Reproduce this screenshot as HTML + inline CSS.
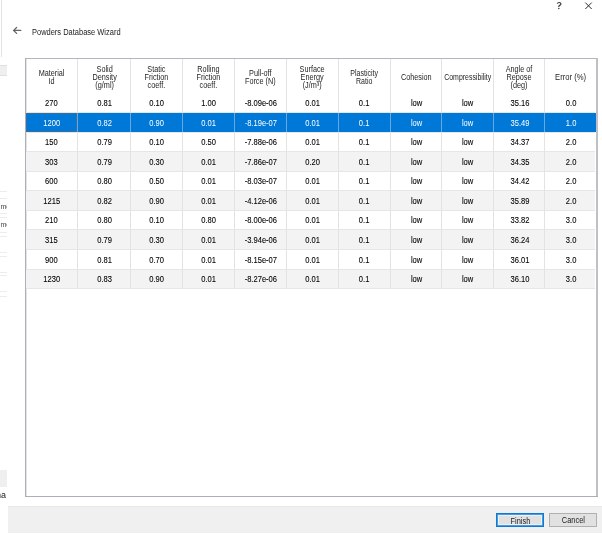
<!DOCTYPE html>
<html><head><meta charset="utf-8"><style>
html,body{margin:0;padding:0;}
body{width:602px;height:534px;position:relative;overflow:hidden;background:#fff;font-family:"Liberation Sans",sans-serif;color:#1a1a1a;-webkit-font-smoothing:antialiased;}
#root{position:absolute;left:0;top:0;width:602px;height:534px;will-change:transform;}
.a{position:absolute;}
.vl{position:absolute;width:1px;background:#e3e3e3;}
.hl{position:absolute;height:1px;background:#e6e6e6;}
.hc{position:absolute;text-align:center;font-size:8.2px;line-height:8px;color:#1e1e1e;letter-spacing:0px;}
.hc span,.dc span{display:inline-block;transform-origin:50% 50%;}
.hc span{transform:scaleX(0.87);}
.dc span{transform:scaleX(0.86);}
.dc{position:absolute;text-align:center;font-size:8.8px;line-height:9px;color:#000;-webkit-text-stroke:0.1px currentColor;}
.bg{position:absolute;left:0;width:7px;height:1px;background:#ececec;}
</style></head><body><div id="root">

<div class="a" style="left:1px;top:0;width:1px;height:57px;background:#e4e4e4"></div>
<div class="a" style="left:0;top:65px;width:7px;height:9px;background:#efefef;border-top:1px solid #e0e0e0;border-bottom:1px solid #e0e0e0"></div>
<div class="bg" style="top:191px"></div>
<div class="bg" style="top:198px"></div>
<div class="bg" style="top:213px"></div>
<div class="bg" style="top:217px"></div>
<div class="bg" style="top:232px"></div>
<div class="bg" style="top:236px"></div>
<div class="bg" style="top:252px"></div>
<div class="bg" style="top:256px"></div>
<div class="bg" style="top:272px"></div>
<div class="bg" style="top:275px"></div>
<div class="bg" style="top:291px"></div>
<div class="bg" style="top:296px"></div>
<div class="a" style="left:0;top:195px;width:7px;height:40px;overflow:hidden"><div class="a" style="left:0.5px;top:8px;font-size:7px;color:#444;line-height:8px">me</div><div class="a" style="left:0.5px;top:26px;font-size:7px;color:#444;line-height:8px">me</div></div>
<div class="a" style="left:0;top:470px;width:7px;height:17px;background:#efefef"></div>
<div class="a" style="left:-4px;top:490px;font-size:9px;color:#222;line-height:10px">na</div>
<svg class="a" style="left:0;top:0" width="602" height="14" viewBox="0 0 602 14"><path d="M557.3 3.6C557.7 2.1 561 2 560.9 3.9C560.8 5.2 558.7 5.4 558.6 6.9" stroke="#333" stroke-width="1.15" fill="none"/><circle cx="558.8" cy="8.6" r="0.75" fill="#333"/><path d="M585.3 2.6L591.7 9M591.7 2.6L585.3 9" stroke="#222" stroke-width="0.95"/></svg>
<svg class="a" style="left:12px;top:26px" width="10" height="9" viewBox="0 0 10 9"><path d="M8.8 4.4H1.8M4.6 1.5L1.6 4.4L4.6 7.4" stroke="#666" stroke-width="1.25" fill="none" stroke-linecap="round"/></svg>
<div class="a" style="left:31.5px;top:27px;font-size:8.5px;line-height:10px;color:#222;transform:scaleX(0.88);transform-origin:0 50%">Powders Database Wizard</div>
<div class="a" style="left:25px;top:58px;width:573px;height:1px;background:#b3b5bc"></div>
<div class="a" style="left:25px;top:58px;width:1px;height:439px;background:#acafb7"></div>
<div class="a" style="left:26px;top:59px;width:1px;height:437px;background:#e3e4e8"></div>
<div class="a" style="left:596px;top:58px;width:2px;height:439px;background:#bec0c6"></div>
<div class="a" style="left:25px;top:496px;width:573px;height:1px;background:#acafb7"></div>
<div class="a" style="left:26px;top:112.5px;width:570px;height:19.6px;background:#0078d7"></div>
<div class="a" style="left:26px;top:151.7px;width:569px;height:19.6px;background:#f3f3f3"></div>
<div class="a" style="left:26px;top:190.8px;width:569px;height:19.6px;background:#f3f3f3"></div>
<div class="a" style="left:26px;top:229.8px;width:569px;height:19.6px;background:#f3f3f3"></div>
<div class="a" style="left:26px;top:269.0px;width:569px;height:19.6px;background:#f3f3f3"></div>
<div class="hl" style="left:26px;top:112.0px;width:569px"></div>
<div class="hl" style="left:26px;top:131.6px;width:569px"></div>
<div class="hl" style="left:26px;top:151.2px;width:569px"></div>
<div class="hl" style="left:26px;top:170.7px;width:569px"></div>
<div class="hl" style="left:26px;top:190.2px;width:569px"></div>
<div class="hl" style="left:26px;top:209.8px;width:569px"></div>
<div class="hl" style="left:26px;top:229.3px;width:569px"></div>
<div class="hl" style="left:26px;top:248.9px;width:569px"></div>
<div class="hl" style="left:26px;top:268.5px;width:569px"></div>
<div class="hl" style="left:26px;top:288.0px;width:569px"></div>
<div class="vl" style="left:77px;top:59px;height:229.5px"></div>
<div class="vl" style="left:130px;top:59px;height:229.5px"></div>
<div class="vl" style="left:182px;top:59px;height:229.5px"></div>
<div class="vl" style="left:234px;top:59px;height:229.5px"></div>
<div class="vl" style="left:286px;top:59px;height:229.5px"></div>
<div class="vl" style="left:338px;top:59px;height:229.5px"></div>
<div class="vl" style="left:390px;top:59px;height:229.5px"></div>
<div class="vl" style="left:441px;top:59px;height:229.5px"></div>
<div class="vl" style="left:493px;top:59px;height:229.5px"></div>
<div class="vl" style="left:544px;top:59px;height:229.5px"></div>
<div class="vl" style="left:77px;top:113px;height:19px;background:#6aa7e0"></div>
<div class="vl" style="left:130px;top:113px;height:19px;background:#6aa7e0"></div>
<div class="vl" style="left:182px;top:113px;height:19px;background:#6aa7e0"></div>
<div class="vl" style="left:234px;top:113px;height:19px;background:#6aa7e0"></div>
<div class="vl" style="left:286px;top:113px;height:19px;background:#6aa7e0"></div>
<div class="vl" style="left:338px;top:113px;height:19px;background:#6aa7e0"></div>
<div class="vl" style="left:390px;top:113px;height:19px;background:#6aa7e0"></div>
<div class="vl" style="left:441px;top:113px;height:19px;background:#6aa7e0"></div>
<div class="vl" style="left:493px;top:113px;height:19px;background:#6aa7e0"></div>
<div class="vl" style="left:544px;top:113px;height:19px;background:#6aa7e0"></div>
<div class="a" style="left:26px;top:113px;width:49px;height:17px;border:1px solid #5a6a7a;opacity:0.6"></div>
<div class="hc" style="left:15.0px;width:73.0px;top:69.75px"><span style="transform:scaleX(0.8874)">Material<br>Id</span></div>
<div class="hc" style="left:68.0px;width:72.6px;top:65.75px"><span style="transform:scaleX(0.8874)">Solid<br>Density<br>(g/ml)</span></div>
<div class="hc" style="left:120.6px;width:72.2px;top:65.75px"><span style="transform:scaleX(0.8874)">Static<br>Friction<br>coeff.</span></div>
<div class="hc" style="left:172.8px;width:71.8px;top:65.75px"><span style="transform:scaleX(0.8874)">Rolling<br>Friction<br>coeff.</span></div>
<div class="hc" style="left:224.6px;width:72.1px;top:69.75px"><span style="transform:scaleX(0.8874)">Pull-off<br>Force (N)</span></div>
<div class="hc" style="left:276.7px;width:71.8px;top:65.75px"><span style="transform:scaleX(0.8874)">Surface<br>Energy<br>(J/m&sup3;)</span></div>
<div class="hc" style="left:328.5px;width:71.7px;top:69.75px"><span style="transform:scaleX(0.8568)">Plasticity<br>Ratio</span></div>
<div class="hc" style="left:380.2px;width:71.5px;top:73.75px"><span style="transform:scaleX(0.8874)">Cohesion</span></div>
<div class="hc" style="left:431.7px;width:72.1px;top:73.75px"><span style="transform:scaleX(0.8466)">Compressibility</span></div>
<div class="hc" style="left:483.8px;width:71.1px;top:65.75px"><span style="transform:scaleX(0.8874)">Angle of<br>Repose<br>(deg)</span></div>
<div class="hc" style="left:534.9px;width:72.1px;top:73.75px"><span style="transform:scaleX(0.9384)">Error (%)</span></div>
<div class="dc" style="left:25.2px;width:53.0px;top:99.1px;color:#000"><span>270</span></div>
<div class="dc" style="left:78.2px;width:52.6px;top:99.1px;color:#000"><span>0.81</span></div>
<div class="dc" style="left:130.8px;width:52.2px;top:99.1px;color:#000"><span>0.10</span></div>
<div class="dc" style="left:183.0px;width:51.8px;top:99.1px;color:#000"><span>1.00</span></div>
<div class="dc" style="left:234.8px;width:52.1px;top:99.1px;color:#000"><span>-8.09e-06</span></div>
<div class="dc" style="left:286.9px;width:51.8px;top:99.1px;color:#000"><span>0.01</span></div>
<div class="dc" style="left:338.7px;width:51.7px;top:99.1px;color:#000"><span>0.1</span></div>
<div class="dc" style="left:390.4px;width:51.5px;top:99.1px;color:#000"><span>low</span></div>
<div class="dc" style="left:441.9px;width:52.1px;top:99.1px;color:#000"><span>low</span></div>
<div class="dc" style="left:494.0px;width:51.1px;top:99.1px;color:#000"><span>35.16</span></div>
<div class="dc" style="left:545.1px;width:52.1px;top:99.1px;color:#000"><span>0.0</span></div>
<div class="dc" style="left:25.2px;width:53.0px;top:118.6px;color:#fff;-webkit-text-stroke:0"><span>1200</span></div>
<div class="dc" style="left:78.2px;width:52.6px;top:118.6px;color:#fff;-webkit-text-stroke:0"><span>0.82</span></div>
<div class="dc" style="left:130.8px;width:52.2px;top:118.6px;color:#fff;-webkit-text-stroke:0"><span>0.90</span></div>
<div class="dc" style="left:183.0px;width:51.8px;top:118.6px;color:#fff;-webkit-text-stroke:0"><span>0.01</span></div>
<div class="dc" style="left:234.8px;width:52.1px;top:118.6px;color:#fff;-webkit-text-stroke:0"><span>-8.19e-07</span></div>
<div class="dc" style="left:286.9px;width:51.8px;top:118.6px;color:#fff;-webkit-text-stroke:0"><span>0.01</span></div>
<div class="dc" style="left:338.7px;width:51.7px;top:118.6px;color:#fff;-webkit-text-stroke:0"><span>0.1</span></div>
<div class="dc" style="left:390.4px;width:51.5px;top:118.6px;color:#fff;-webkit-text-stroke:0"><span>low</span></div>
<div class="dc" style="left:441.9px;width:52.1px;top:118.6px;color:#fff;-webkit-text-stroke:0"><span>low</span></div>
<div class="dc" style="left:494.0px;width:51.1px;top:118.6px;color:#fff;-webkit-text-stroke:0"><span>35.49</span></div>
<div class="dc" style="left:545.1px;width:52.1px;top:118.6px;color:#fff;-webkit-text-stroke:0"><span>1.0</span></div>
<div class="dc" style="left:25.2px;width:53.0px;top:138.2px;color:#000"><span>150</span></div>
<div class="dc" style="left:78.2px;width:52.6px;top:138.2px;color:#000"><span>0.79</span></div>
<div class="dc" style="left:130.8px;width:52.2px;top:138.2px;color:#000"><span>0.10</span></div>
<div class="dc" style="left:183.0px;width:51.8px;top:138.2px;color:#000"><span>0.50</span></div>
<div class="dc" style="left:234.8px;width:52.1px;top:138.2px;color:#000"><span>-7.88e-06</span></div>
<div class="dc" style="left:286.9px;width:51.8px;top:138.2px;color:#000"><span>0.01</span></div>
<div class="dc" style="left:338.7px;width:51.7px;top:138.2px;color:#000"><span>0.1</span></div>
<div class="dc" style="left:390.4px;width:51.5px;top:138.2px;color:#000"><span>low</span></div>
<div class="dc" style="left:441.9px;width:52.1px;top:138.2px;color:#000"><span>low</span></div>
<div class="dc" style="left:494.0px;width:51.1px;top:138.2px;color:#000"><span>34.37</span></div>
<div class="dc" style="left:545.1px;width:52.1px;top:138.2px;color:#000"><span>2.0</span></div>
<div class="dc" style="left:25.2px;width:53.0px;top:157.7px;color:#000"><span>303</span></div>
<div class="dc" style="left:78.2px;width:52.6px;top:157.7px;color:#000"><span>0.79</span></div>
<div class="dc" style="left:130.8px;width:52.2px;top:157.7px;color:#000"><span>0.30</span></div>
<div class="dc" style="left:183.0px;width:51.8px;top:157.7px;color:#000"><span>0.01</span></div>
<div class="dc" style="left:234.8px;width:52.1px;top:157.7px;color:#000"><span>-7.86e-07</span></div>
<div class="dc" style="left:286.9px;width:51.8px;top:157.7px;color:#000"><span>0.20</span></div>
<div class="dc" style="left:338.7px;width:51.7px;top:157.7px;color:#000"><span>0.1</span></div>
<div class="dc" style="left:390.4px;width:51.5px;top:157.7px;color:#000"><span>low</span></div>
<div class="dc" style="left:441.9px;width:52.1px;top:157.7px;color:#000"><span>low</span></div>
<div class="dc" style="left:494.0px;width:51.1px;top:157.7px;color:#000"><span>34.35</span></div>
<div class="dc" style="left:545.1px;width:52.1px;top:157.7px;color:#000"><span>2.0</span></div>
<div class="dc" style="left:25.2px;width:53.0px;top:177.3px;color:#000"><span>600</span></div>
<div class="dc" style="left:78.2px;width:52.6px;top:177.3px;color:#000"><span>0.80</span></div>
<div class="dc" style="left:130.8px;width:52.2px;top:177.3px;color:#000"><span>0.50</span></div>
<div class="dc" style="left:183.0px;width:51.8px;top:177.3px;color:#000"><span>0.01</span></div>
<div class="dc" style="left:234.8px;width:52.1px;top:177.3px;color:#000"><span>-8.03e-07</span></div>
<div class="dc" style="left:286.9px;width:51.8px;top:177.3px;color:#000"><span>0.01</span></div>
<div class="dc" style="left:338.7px;width:51.7px;top:177.3px;color:#000"><span>0.1</span></div>
<div class="dc" style="left:390.4px;width:51.5px;top:177.3px;color:#000"><span>low</span></div>
<div class="dc" style="left:441.9px;width:52.1px;top:177.3px;color:#000"><span>low</span></div>
<div class="dc" style="left:494.0px;width:51.1px;top:177.3px;color:#000"><span>34.42</span></div>
<div class="dc" style="left:545.1px;width:52.1px;top:177.3px;color:#000"><span>2.0</span></div>
<div class="dc" style="left:25.2px;width:53.0px;top:196.8px;color:#000"><span>1215</span></div>
<div class="dc" style="left:78.2px;width:52.6px;top:196.8px;color:#000"><span>0.82</span></div>
<div class="dc" style="left:130.8px;width:52.2px;top:196.8px;color:#000"><span>0.90</span></div>
<div class="dc" style="left:183.0px;width:51.8px;top:196.8px;color:#000"><span>0.01</span></div>
<div class="dc" style="left:234.8px;width:52.1px;top:196.8px;color:#000"><span>-4.12e-06</span></div>
<div class="dc" style="left:286.9px;width:51.8px;top:196.8px;color:#000"><span>0.01</span></div>
<div class="dc" style="left:338.7px;width:51.7px;top:196.8px;color:#000"><span>0.1</span></div>
<div class="dc" style="left:390.4px;width:51.5px;top:196.8px;color:#000"><span>low</span></div>
<div class="dc" style="left:441.9px;width:52.1px;top:196.8px;color:#000"><span>low</span></div>
<div class="dc" style="left:494.0px;width:51.1px;top:196.8px;color:#000"><span>35.89</span></div>
<div class="dc" style="left:545.1px;width:52.1px;top:196.8px;color:#000"><span>2.0</span></div>
<div class="dc" style="left:25.2px;width:53.0px;top:216.4px;color:#000"><span>210</span></div>
<div class="dc" style="left:78.2px;width:52.6px;top:216.4px;color:#000"><span>0.80</span></div>
<div class="dc" style="left:130.8px;width:52.2px;top:216.4px;color:#000"><span>0.10</span></div>
<div class="dc" style="left:183.0px;width:51.8px;top:216.4px;color:#000"><span>0.80</span></div>
<div class="dc" style="left:234.8px;width:52.1px;top:216.4px;color:#000"><span>-8.00e-06</span></div>
<div class="dc" style="left:286.9px;width:51.8px;top:216.4px;color:#000"><span>0.01</span></div>
<div class="dc" style="left:338.7px;width:51.7px;top:216.4px;color:#000"><span>0.1</span></div>
<div class="dc" style="left:390.4px;width:51.5px;top:216.4px;color:#000"><span>low</span></div>
<div class="dc" style="left:441.9px;width:52.1px;top:216.4px;color:#000"><span>low</span></div>
<div class="dc" style="left:494.0px;width:51.1px;top:216.4px;color:#000"><span>33.82</span></div>
<div class="dc" style="left:545.1px;width:52.1px;top:216.4px;color:#000"><span>3.0</span></div>
<div class="dc" style="left:25.2px;width:53.0px;top:235.9px;color:#000"><span>315</span></div>
<div class="dc" style="left:78.2px;width:52.6px;top:235.9px;color:#000"><span>0.79</span></div>
<div class="dc" style="left:130.8px;width:52.2px;top:235.9px;color:#000"><span>0.30</span></div>
<div class="dc" style="left:183.0px;width:51.8px;top:235.9px;color:#000"><span>0.01</span></div>
<div class="dc" style="left:234.8px;width:52.1px;top:235.9px;color:#000"><span>-3.94e-06</span></div>
<div class="dc" style="left:286.9px;width:51.8px;top:235.9px;color:#000"><span>0.01</span></div>
<div class="dc" style="left:338.7px;width:51.7px;top:235.9px;color:#000"><span>0.1</span></div>
<div class="dc" style="left:390.4px;width:51.5px;top:235.9px;color:#000"><span>low</span></div>
<div class="dc" style="left:441.9px;width:52.1px;top:235.9px;color:#000"><span>low</span></div>
<div class="dc" style="left:494.0px;width:51.1px;top:235.9px;color:#000"><span>36.24</span></div>
<div class="dc" style="left:545.1px;width:52.1px;top:235.9px;color:#000"><span>3.0</span></div>
<div class="dc" style="left:25.2px;width:53.0px;top:255.5px;color:#000"><span>900</span></div>
<div class="dc" style="left:78.2px;width:52.6px;top:255.5px;color:#000"><span>0.81</span></div>
<div class="dc" style="left:130.8px;width:52.2px;top:255.5px;color:#000"><span>0.70</span></div>
<div class="dc" style="left:183.0px;width:51.8px;top:255.5px;color:#000"><span>0.01</span></div>
<div class="dc" style="left:234.8px;width:52.1px;top:255.5px;color:#000"><span>-8.15e-07</span></div>
<div class="dc" style="left:286.9px;width:51.8px;top:255.5px;color:#000"><span>0.01</span></div>
<div class="dc" style="left:338.7px;width:51.7px;top:255.5px;color:#000"><span>0.1</span></div>
<div class="dc" style="left:390.4px;width:51.5px;top:255.5px;color:#000"><span>low</span></div>
<div class="dc" style="left:441.9px;width:52.1px;top:255.5px;color:#000"><span>low</span></div>
<div class="dc" style="left:494.0px;width:51.1px;top:255.5px;color:#000"><span>36.01</span></div>
<div class="dc" style="left:545.1px;width:52.1px;top:255.5px;color:#000"><span>3.0</span></div>
<div class="dc" style="left:25.2px;width:53.0px;top:275.0px;color:#000"><span>1230</span></div>
<div class="dc" style="left:78.2px;width:52.6px;top:275.0px;color:#000"><span>0.83</span></div>
<div class="dc" style="left:130.8px;width:52.2px;top:275.0px;color:#000"><span>0.90</span></div>
<div class="dc" style="left:183.0px;width:51.8px;top:275.0px;color:#000"><span>0.01</span></div>
<div class="dc" style="left:234.8px;width:52.1px;top:275.0px;color:#000"><span>-8.27e-06</span></div>
<div class="dc" style="left:286.9px;width:51.8px;top:275.0px;color:#000"><span>0.01</span></div>
<div class="dc" style="left:338.7px;width:51.7px;top:275.0px;color:#000"><span>0.1</span></div>
<div class="dc" style="left:390.4px;width:51.5px;top:275.0px;color:#000"><span>low</span></div>
<div class="dc" style="left:441.9px;width:52.1px;top:275.0px;color:#000"><span>low</span></div>
<div class="dc" style="left:494.0px;width:51.1px;top:275.0px;color:#000"><span>36.10</span></div>
<div class="dc" style="left:545.1px;width:52.1px;top:275.0px;color:#000"><span>3.0</span></div>
<div class="a" style="left:8px;top:506px;width:594px;height:27px;background:#f0f0f0;box-shadow:inset 0 1px 0 #e9e9e9"></div>
<div class="a" style="left:496px;top:513px;width:46px;height:12px;border:1px solid #0a7ad6;background:#e1e1e1;box-shadow:inset 0 0 0 1px #4d9be0,inset 0 0 0 2px #eef0f2"></div>
<div class="a" style="left:496px;top:513px;width:48px;height:14px;font-size:8.6px;line-height:14px;text-align:center;color:#1a1a1a"><span style="display:inline-block;transform:scaleX(0.86);position:relative;top:0.5px">Finish</span></div>
<div class="a" style="left:549px;top:513px;width:46px;height:12px;border:1px solid #b0b0b0;background:#e1e1e1"></div>
<div class="a" style="left:549px;top:513px;width:48px;height:14px;font-size:8.6px;line-height:14px;text-align:center;color:#1a1a1a"><span style="display:inline-block;transform:scaleX(0.86);position:relative;top:0px">Cancel</span></div>
</div></body></html>
